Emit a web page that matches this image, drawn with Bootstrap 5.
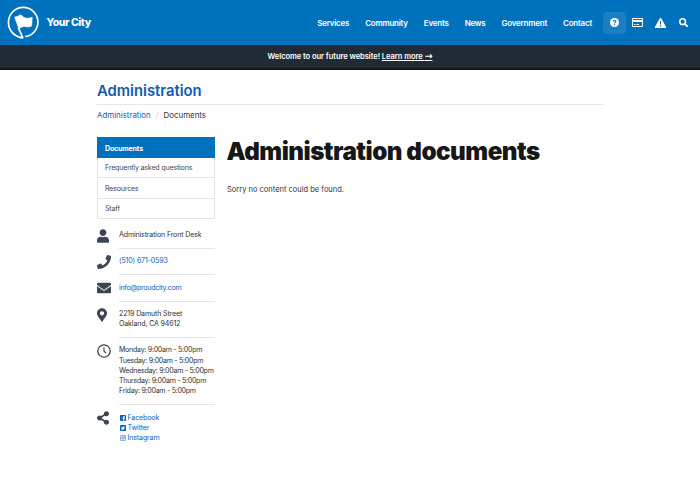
<!DOCTYPE html>
<html lang="en">
<head>
<meta charset="utf-8">
<meta name="viewport" content="width=device-width, initial-scale=1">
<title>Administration documents</title>
<link href="https://cdn.jsdelivr.net/npm/bootstrap@5.3.0/dist/css/bootstrap.min.css" rel="stylesheet">
<style>
body{font-family:Inter,"Liberation Sans",sans-serif;font-size:7.1px;line-height:10.25px;color:#333;background:#fff;overflow:hidden}
a{color:#0f62b8;text-decoration:none}
svg{display:block;flex:none}
svg:not([fill]){fill:currentColor}
.topbar{height:45px;background:#0071bc;padding:0 5px 0 7px}
.brand-name{font-size:10.4px;font-weight:800;letter-spacing:-.36px;color:#fff;margin-left:6.5px;padding-top:1px}
.main-links{gap:16px;margin-right:11px}
.main-links .nav-link{font-size:8px;font-weight:600;line-height:12px;letter-spacing:-.23px;color:#fff;white-space:nowrap}
.tool{width:23px;height:22px;border-radius:4px;color:#fff}
.tool.on{background:#1b80c3}
.notice{height:25px;background:#212b36;border-bottom:2px solid #11161c;color:#fff;font-size:7.6px;font-weight:600;letter-spacing:-.08px;padding-top:2px}
.notice a{color:#fff;text-decoration:underline}
.arrow{font-family:"DejaVu Sans",sans-serif;font-size:9.5px;line-height:8px}
.page{width:506px;margin:0 auto}
.section-title{font-size:14.8px;line-height:18px;font-weight:600;color:#0f5bb5;padding:12px 0 4px;border-bottom:1px solid #e4e6e8;margin:0}
.crumbs{font-size:7.9px;line-height:12px;margin:4px 0 16px;--bs-breadcrumb-item-padding-x:5px;--bs-breadcrumb-divider-color:#ccc}
.side{width:118px;margin-right:12px}
.side .list-group{margin-bottom:3.9px}
.side .list-group-item{height:20.5px;padding:4.6px 7px;font-size:7.1px;line-height:11px;letter-spacing:-.19px;color:#4a4a4a;border-color:#e3e3e3;border-radius:0}
.side .list-group-item.active{background:#0071bc;border-color:#0071bc;color:#fff;font-weight:700}
.info{display:grid;grid-template-columns:22px 96px;color:#3c4652}
.info-text{color:#333;white-space:nowrap;letter-spacing:-.16px;border-bottom:1px solid #e2e4e6;padding:7.2px 0 7.8px}
.info-text.hours,.info-text.mail{letter-spacing:-.29px}
.info:last-child .info-text{border:0}
.info-icon{padding-top:6px}
.social a{display:flex;align-items:center;gap:1.5px;padding-left:1px}
h1{font-size:24.2px;line-height:29px;font-weight:900;letter-spacing:-.5px;color:#171717;margin:0 0 18px -.5px;white-space:nowrap}
.empty{font-size:7.5px;line-height:11px;margin:0}
</style>
<script src="https://cdn.jsdelivr.net/npm/bootstrap@5.3.0/dist/js/bootstrap.bundle.min.js"></script>
</head>
<body>
<header class="topbar d-flex align-items-center">
  <a href="#" class="d-flex align-items-center">
    <svg width="33" height="34" viewBox="0 0 33 34"><path d="M11.200 21.500L15.800 31.800C7.500 31.200 1.500 24.500 1.500 16.500A14.700 14.700 0 1 1 18.200 30.700" fill="none" stroke="#fff" stroke-width="1.700" stroke-linejoin="round"/><path d="M7.500 11c2.300-.2 3.700-.8 5.400-2.200 1.400.3 2.700.9 3.600 2.500 2.900 1.200 5.200 1.100 8.700-.1l-.5 8.700c-2.100 1.200-4.200 1.300-7.100.5-2.300.1-4 .7-5.500 2.600z" fill="#fff" stroke="#fff" stroke-width=".6" stroke-linejoin="round"/></svg>
    <span class="brand-name">Your City</span>
  </a>
  <nav class="nav main-links ms-auto flex-nowrap">
    <a class="nav-link p-0" href="#">Services</a><a class="nav-link p-0" href="#">Community</a><a class="nav-link p-0" href="#">Events</a><a class="nav-link p-0" href="#">News</a><a class="nav-link p-0" href="#">Government</a><a class="nav-link p-0" href="#">Contact</a>
  </nav>
  <div class="d-flex">
    <a href="#" class="tool on d-flex align-items-center justify-content-center" aria-label="Help"><svg width="9" height="9" viewBox="0 0 18 18"><circle cx="9" cy="9" r="9"/><path d="M6.400 7c.1-3.600 5.500-3.400 5.300-.3C11.600 8.700 9 8.500 9 10.800M9 12.300v2" fill="none" stroke="#1772b8" stroke-width="2.100"/></svg></a>
    <a href="#" class="tool d-flex align-items-center justify-content-center" aria-label="Payments"><svg width="11" height="9" viewBox="0 0 22 18"><path fill-rule="evenodd" d="M2 0h18a2 2 0 0 1 2 2v14a2 2 0 0 1-2 2H2a2 2 0 0 1-2-2V2a2 2 0 0 1 2-2zm0 2v2h18V2zm0 6v8h18V8zm2 4h3v2H4zm5 0h5v2H9z"/></svg></a>
    <a href="#" class="tool d-flex align-items-center justify-content-center" aria-label="Alerts"><svg width="11" height="10" viewBox="0 0 22 20"><path fill-rule="evenodd" d="M9.300 1a2 2 0 0 1 3.400 0l9 16a2 2 0 0 1-1.700 3H2a2 2 0 0 1-1.700-3zM9.700 6l.5 7h1.600l.5-7zm1.300 8.300a1.500 1.500 0 1 0 .1 0z"/></svg></a>
    <a href="#" class="tool d-flex align-items-center justify-content-center" aria-label="Search"><svg width="9" height="9" viewBox="0 0 18 18" fill="none" stroke="#fff"><circle cx="7.300" cy="7.300" r="5.700" stroke-width="3"/><path d="M11.700 11.700l4.600 4.600" stroke-width="3.400" stroke-linecap="round"/></svg></a>
  </div>
</header>
<div class="notice d-flex align-items-center justify-content-center"><span>Welcome to our future website! <a href="#">Learn more <span class="arrow">→</span></a></span></div>
<main class="page">
  <div class="section-title">Administration</div>
  <ol class="breadcrumb crumbs">
    <li class="breadcrumb-item"><a href="#">Administration</a></li>
    <li class="breadcrumb-item">Documents</li>
  </ol>
  <div class="d-flex">
    <aside class="side flex-shrink-0">
      <div class="list-group">
        <a href="#" class="list-group-item active">Documents</a>
        <a href="#" class="list-group-item">Frequently asked questions</a>
        <a href="#" class="list-group-item">Resources</a>
        <a href="#" class="list-group-item">Staff</a>
      </div>
      <div class="info"><div class="info-icon"><svg width="12" height="14" viewBox="0 0 448 512"><path d="M224 256c70.700 0 128-57.300 128-128S294.700 0 224 0 96 57.300 96 128s57.300 128 128 128zm89.600 32h-16.700c-22.200 10.200-46.900 16-72.900 16s-50.600-5.800-72.900-16h-16.700C60.200 288 0 348.200 0 422.400V464c0 26.500 21.500 48 48 48h352c26.500 0 48-21.500 48-48v-41.600c0-74.200-60.200-134.400-134.400-134.400z"/></svg></div><div class="info-text">Administration Front Desk</div></div>
      <div class="info"><div class="info-icon"><svg width="14" height="14" viewBox="0 0 512 512"><path d="M493.400 24.600l-104-24c-11.300-2.600-22.900 3.300-27.500 13.900l-48 112c-4.200 9.800-1.400 21.300 6.900 28l60.600 49.600c-36 76.700-98.900 140.500-177.200 177.200l-49.600-60.600c-6.800-8.300-18.200-11.100-28-6.900l-112 48C3.900 366.500-2 378.100.6 389.400l24 104C27.100 504.200 36.700 512 48 512c256.100 0 464-207.500 464-464 0-11.200-7.700-20.900-18.600-23.400z"/></svg></div><div class="info-text"><a href="#">(510) 671-0593</a></div></div>
      <div class="info"><div class="info-icon"><svg width="14" height="14" viewBox="0 0 512 512"><path d="M502.300 190.800c3.900-3.100 9.700-.2 9.700 4.700V400c0 26.500-21.500 48-48 48H48c-26.500 0-48-21.500-48-48V195.600c0-5 5.700-7.800 9.700-4.700 22.400 17.400 52.100 39.500 154.100 113.600 21.100 15.400 56.700 47.800 92.200 47.600 35.700.3 72-32.800 92.300-47.600 102-74.100 131.600-96.300 154-113.700zM256 320c23.200.4 56.600-29.200 73.400-41.400 132.700-96.300 142.800-104.700 173.400-128.700 5.800-4.500 9.200-11.500 9.200-18.900v-19c0-26.500-21.500-48-48-48H48c-26.500 0-48 21.500-48 48v19c0 7.400 3.400 14.300 9.200 18.900 30.600 23.900 40.700 32.400 173.400 128.700 16.800 12.200 50.200 41.800 73.400 41.400z"/></svg></div><div class="info-text mail"><a href="#">info@proudcity.com</a></div></div>
      <div class="info"><div class="info-icon"><svg width="10" height="14" viewBox="0 0 384 512"><path d="M172.268 501.670C26.970 291.031 0 269.413 0 192 0 85.961 85.961 0 192 0s192 85.961 192 192c0 77.413-26.970 99.031-172.268 309.670-9.535 13.774-29.930 13.773-39.464 0zM192 272c44.183 0 80-35.817 80-80s-35.817-80-80-80-80 35.817-80 80 35.817 80 80 80z"/></svg></div><div class="info-text">2219 Damuth Street<br>Oakland, CA 94612</div></div>
      <div class="info"><div class="info-icon"><svg width="14" height="14" viewBox="0 0 28 28" fill="none" stroke="currentColor" stroke-width="2.600"><circle cx="14" cy="14" r="12.400"/><path d="M14 6.500V14.500l4 3.500" stroke-width="2.200"/></svg></div><div class="info-text hours">Monday: 9:00am - 5:00pm<br>Tuesday: 9:00am - 5:00pm<br>Wednesday: 9:00am - 5:00pm<br>Thursday: 9:00am - 5:00pm<br>Friday: 9:00am - 5:00pm</div></div>
      <div class="info"><div class="info-icon"><svg width="12" height="14" viewBox="0 0 448 512"><path d="M352 320c-22.608 0-43.387 7.819-59.790 20.895l-102.486-64.054a96.551 96.551 0 0 0 0-41.683l102.486-64.054C308.613 184.181 329.392 192 352 192c53.019 0 96-42.981 96-96S405.019 0 352 0s-96 42.981-96 96c0 7.158.79 14.130 2.276 20.841L155.790 180.895C139.387 167.819 118.608 160 96 160c-53.019 0-96 42.981-96 96s42.981 96 96 96c22.608 0 43.387-7.819 59.790-20.895l102.486 64.054A96.301 96.301 0 0 0 256 416c0 53.019 42.981 96 96 96s96-42.981 96-96-42.981-96-96-96z"/></svg></div><div class="info-text social">
        <a href="#"><svg width="6" height="6" viewBox="0 0 12 12"><path d="M1.500 0h9A1.500 1.500 0 0 1 12 1.500v9a1.500 1.500 0 0 1-1.500 1.500H8.300V7.500h1.500l.3-1.800H8.300V4.500c0-.6.3-.9 1-.9h.9V2C7.900 1.500 6.400 2.300 6.400 4.300v1.400H4.800v1.800h1.600V12H1.500A1.500 1.500 0 0 1 0 10.500v-9A1.500 1.500 0 0 1 1.500 0z"/></svg>Facebook</a>
        <a href="#"><svg width="6" height="6" viewBox="0 0 12 12"><rect width="12" height="12" rx="1.500"/><path fill="#fff" d="M10 3.600l-.8.800C9.200 7.800 6.900 9.600 4.400 9.600c-.9 0-1.700-.2-2.400-.7.900 0 1.600-.2 2.200-.7-.7 0-1.300-.5-1.500-1.100h.7C2.600 6.800 2.100 6.100 2.200 5.400l.7.200c-.8-.6-.9-1.500-.5-2.200.9 1 2 1.600 3.400 1.700-.3-1.800 1.600-2.800 2.900-1.700l1-.4-.6.900z"/></svg>Twitter</a>
        <a href="#"><svg width="6" height="6" viewBox="0 0 12 12" fill="none" stroke="currentColor" stroke-width="1.200"><rect x=".6" y=".6" width="10.800" height="10.800" rx="3"/><circle cx="6" cy="6" r="2.500"/><circle cx="9" cy="3" r=".3"/></svg>Instagram</a>
      </div></div>
    </aside>
    <section class="flex-grow-1">
      <h1>Administration documents</h1>
      <p class="empty">Sorry no content could be found.</p>
    </section>
  </div>
</main>
</body>
</html>
